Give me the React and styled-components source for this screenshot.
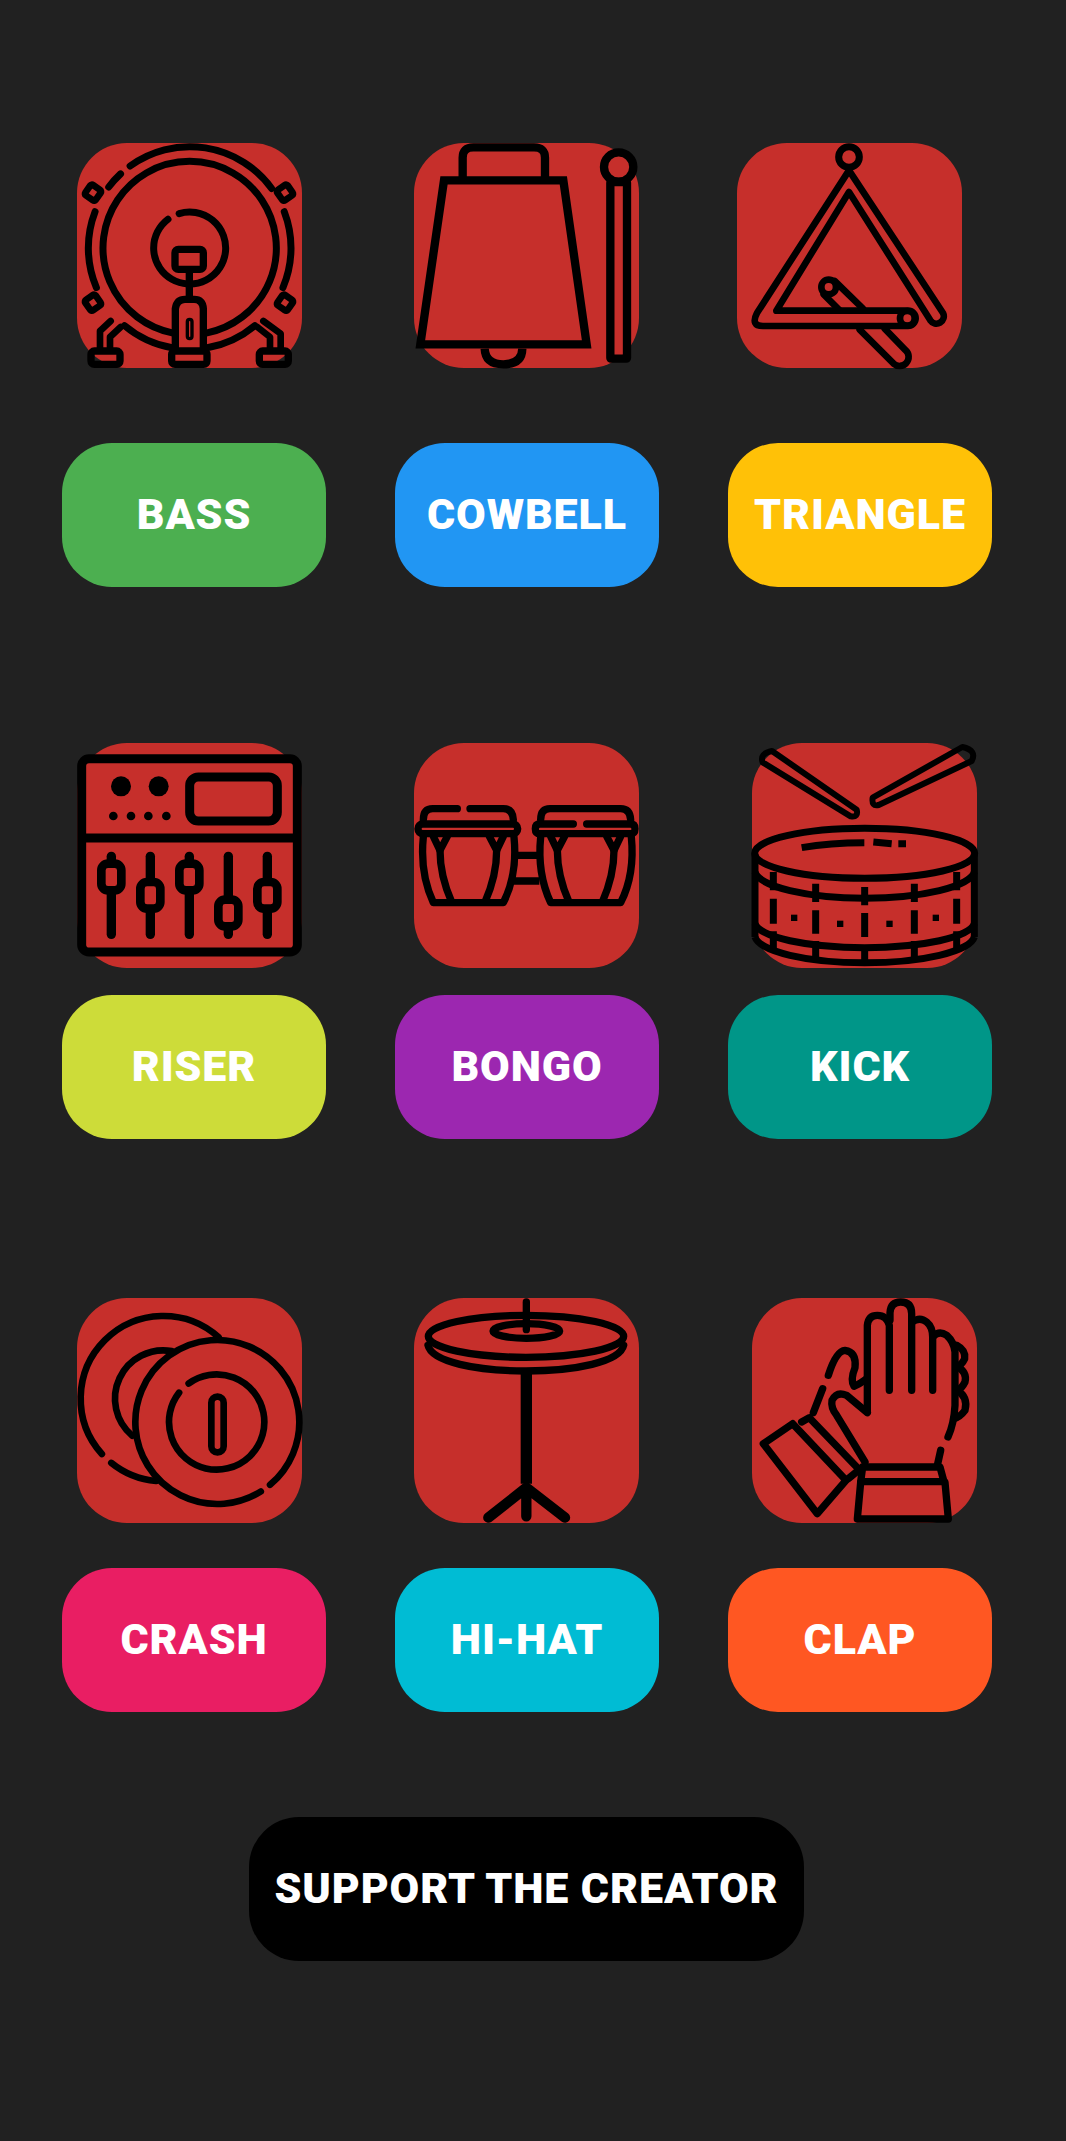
import React from 'react';
import styled, { createGlobalStyle } from 'styled-components';

const ink = '#000';
const tileRed = '#c62f2b';

// icon strokes are written in the 3x units of a 675 box, arcs by clock angle
const arc = (cx, cy, r, from, to) => {
    const rad = (deg) => (deg * Math.PI) / 180;
    const x0 = cx + r * Math.sin(rad(from));
    const y0 = cy - r * Math.cos(rad(from));
    const x1 = cx + r * Math.sin(rad(to));
    const y1 = cy - r * Math.cos(rad(to));
    const large = to - from > 180 ? 1 : 0;
    return `M${x0},${y0} A${r},${r} 0 ${large} 1 ${x1},${y1}`;
};

const Icon = ({ left, top, children }) => (
    <IconSvg viewBox={`${left} ${top} 675 675`} fill='none' stroke={ink} strokeLinecap='round' strokeLinejoin='round'>
        {children}
    </IconSvg>
);

const BassIcon = () => (
    <Icon left={81} top={68}>
        <g strokeWidth='21'>
            <path d={arc(419, 383, 304, -36, 54)} />
            <path d={arc(419, 383, 304, -53, -43)} />
            <path d={arc(419, 383, 304, 69, 113)} />
            <path d={arc(419, 383, 304, -113, -69)} />
            <path d={arc(419, 383, 304, 140, 170)} />
            <path d={arc(419, 383, 304, -170, -140)} />
            <path d={arc(419, 383, 260, -169, 169)} />
            <path d={arc(419, 383, 108, -17, 323)} />
        </g>
        <g strokeWidth='20'>
            <rect x='110' y='198' width='38' height='38' rx='6' transform='rotate(35 129 217)' fill={tileRed} />
            <rect x='686' y='198' width='38' height='38' rx='6' transform='rotate(-35 705 217)' fill={tileRed} />
            <rect x='110' y='528' width='38' height='38' rx='6' transform='rotate(-35 129 547)' fill={tileRed} />
            <rect x='686' y='528' width='38' height='38' rx='6' transform='rotate(35 705 547)' fill={tileRed} />
            <path d='M182,602 L150,632 V688 M212,620 L180,650 V688' />
            <path d='M640,602 L692,640 V688 M622,620 L660,650 V688' />
        </g>
        <g strokeWidth='22'>
            <rect x='375' y='387' width='85' height='60' rx='10' fill={tileRed} />
            <path d='M418,455 V535' />
            <path d='M376,690 V565 Q380,537 405,537 H432 Q458,537 460,565 V690' fill={tileRed} />
            <rect x='365' y='692' width='106' height='40' rx='10' fill={tileRed} />
            <rect x='123' y='692' width='87' height='40' rx='10' />
            <rect x='628' y='692' width='87' height='40' rx='10' />
        </g>
        <rect x='412' y='597' width='14' height='58' rx='7' strokeWidth='10' />
    </Icon>
);

const CowbellIcon = () => (
    <Icon left={72} top={68}>
        <g strokeWidth='25' strokeLinejoin='miter' strokeLinecap='butt'>
            <path d='M218,175 V112 Q218,81 250,81 H432 Q465,81 465,112 V175' />
            <path d='M162,180 H520 L590,672 H91 Z' />
            <path d='M284,685 Q286,732 340,732 Q396,732 397,685' />
        </g>
        <circle cx='686' cy='140' r='44' strokeWidth='25' />
        <rect x='661' y='185' width='50' height='530' rx='2' strokeWidth='25' />
    </Icon>
);

const TriangleIcon = () => (
    <Icon left={52} top={68}>
        <circle cx='388' cy='110' r='31' strokeWidth='21' />
        <g strokeWidth='20'>
            <path d='M345,482 L430,565 M495,625 L558,690 A24,24 0 0 1 522,730 L420,628 M360,570 L312,522' />
            <circle cx='327' cy='500' r='22' />
            <path d='M388,150 L112,578 Q92,617 130,617 H565 A23,23 0 0 0 565,571 H170 L388,215 L632,600 A22,22 0 0 0 670,578 Z' />
            <circle cx='563' cy='594' r='22' />
        </g>
    </Icon>
);

const FADERS = [
    { x: 184, y: 440 },
    { x: 301, y: 495 },
    { x: 418, y: 440 },
    { x: 535, y: 548 },
    { x: 652, y: 495 },
];

const RiserIcon = () => (
    <Icon left={81} top={38}>
        <rect x='95' y='85' width='647' height='580' rx='22' strokeWidth='27' />
        <path d='M95,323 H742' strokeWidth='27' strokeLinecap='butt' />
        <rect x='419' y='140' width='263' height='132' rx='26' strokeWidth='27' />
        <g fill={ink} stroke='none'>
            <circle cx='213' cy='168' r='30' />
            <circle cx='326' cy='168' r='30' />
            <circle cx='190' cy='257' r='13' />
            <circle cx='243' cy='257' r='13' />
            <circle cx='295' cy='257' r='13' />
            <circle cx='349' cy='257' r='13' />
        </g>
        {FADERS.map(({ x, y }) => (
            <g key={x}>
                <path d={`M${x},378 V612`} strokeWidth='28' />
                <rect x={x - 30} y={y - 40} width='60' height='80' rx='20' fill={tileRed} strokeWidth='26' />
            </g>
        ))}
    </Icon>
);

const BongoBody = () => (
    <>
        <path d='M100,320 C92,400 108,470 130,517 H340 C364,470 380,400 372,320' />
        <path d='M150,360 C150,420 165,470 185,515 M320,360 C320,420 305,470 285,515' />
        <path d='M130,318 L150,360 L172,318 M298,318 L320,360 L340,318' />
    </>
);

const BongoIcon = () => (
    <Icon left={72} top={38}>
        <g strokeWidth='22'>
            <path d='M100,268 Q100,235 128,235 H202 M240,235 H340 Q368,235 370,268' />
            <rect x='84' y='281' width='299' height='29' rx='14' fill={tileRed} />
            <BongoBody />
            <path d='M375,375 H448 M372,452 H448' strokeLinecap='butt' />
            <g transform='translate(352 0)'>
                <path d='M100,268 Q100,235 128,235 H340 Q368,235 370,268' />
                <path d='M198,281 H98 Q84,281 84,295 Q84,310 98,310 H369 Q383,310 383,295 Q383,281 369,281 H238' />
                <BongoBody />
            </g>
        </g>
    </Icon>
);

const LUGS = [
    { x: 130, top: [425, 480], mid: [505, 580], low: [603, 660] },
    { x: 257, top: [460, 515], mid: [540, 610], low: [632, 685] },
    { x: 404, top: [470, 525], mid: [548, 620], low: [645, 700] },
    { x: 553, top: [460, 515], mid: [540, 610], low: [632, 685] },
    { x: 680, top: [425, 480], mid: [505, 580], low: [603, 660] },
];

const SnareIcon = () => (
    <Icon left={66} top={38}>
        <g strokeWidth='18'>
            <path d='M126,62 L380,238 Q386,262 362,258 L98,96 Q88,70 126,62 Z' />
            <path d='M697,50 L428,202 Q424,230 446,224 L725,92 Q742,60 697,50 Z' />
        </g>
        <g strokeWidth='21' strokeLinecap='butt'>
            <ellipse cx='404' cy='369' rx='330' ry='75' />
            <path d='M75,370 V620 M733,370 V620' />
            <path d='M75,425 A330,85 0 0 0 733,425' />
            <path d='M75,580 A330,78 0 0 0 733,580' />
            <path d='M75,620 A330,84 0 0 0 733,620' />
            <path d='M215,352 Q300,337 403,337 M430,335 L485,340 M505,340 H528' />
            {LUGS.map(({ x, top, mid, low }) => (
                <path key={x} d={`M${x},${top[0]} V${top[1]} M${x},${mid[0]} V${mid[1]} M${x},${low[0]} V${low[1]}`} />
            ))}
        </g>
        <g fill={ink} stroke='none'>
            <rect x='183' y='553' width='19' height='19' />
            <rect x='321' y='571' width='19' height='19' />
            <rect x='469' y='571' width='19' height='19' />
            <rect x='608' y='553' width='19' height='19' />
        </g>
    </Icon>
);

const CrashIcon = () => (
    <Icon left={81} top={53}>
        <g strokeWidth='20'>
            <path d={arc(340, 355, 248, 228, 402)} />
            <path d={arc(340, 355, 248, 185, 219)} />
            <path d={arc(340, 355, 145, 220, 370)} />
            <path d={arc(502, 425, 246, 148, 500)} />
            <path d={arc(500, 425, 143, -36, 308)} />
            <rect x='484' y='349' width='37' height='167' rx='18' />
        </g>
    </Icon>
);

const HiHatIcon = () => (
    <Icon left={72} top={53}>
        <g strokeWidth='22'>
            <ellipse cx='408' cy='168' rx='293' ry='63' />
            <path d='M114,195 C125,245 260,272 408,272 C556,272 690,245 701,195' />
            <ellipse cx='409' cy='152' rx='100' ry='22' />
            <path d='M409,65 V148' />
        </g>
        <path d='M409,280 V610' strokeWidth='34' strokeLinecap='butt' />
        <path d='M409,622 L295,712 M409,622 L525,712 M409,622 V708' strokeWidth='31' />
    </Icon>
);

const ClapIcon = () => (
    <Icon left={66} top={53}>
        <g strokeWidth='22'>
            <path d='M412,395 V135 Q415,105 442,105 Q470,105 478,135 V330' />
            <path d='M480,120 V97 Q482,65 512,65 Q545,65 545,100 V330' />
            <path d='M546,125 Q570,108 590,125 Q608,140 608,170 V330' />
            <path d='M610,168 Q628,150 650,165 Q672,185 675,215 V375 Q672,430 654,470' />
            <path d='M680,195 Q708,210 704,235 Q695,255 680,258 Q712,275 705,305 Q695,325 682,330 Q715,350 705,390 Q690,410 672,415' />
            <path d='M632,510 L622,555' />
            <path d='M412,397 L350,345 Q320,332 306,360 Q302,382 320,405 L405,545' />
            <path d='M295,285 Q318,212 345,210 Q380,215 375,262 Q360,300 372,318 Q388,312 410,295' />
            <path d='M278,325 L250,397' />
            <path d='M100,490 L188,430 L348,600 L262,700 Z' />
            <path d='M215,425 L238,412 L388,568 L355,595' />
            <path d='M398,560 H630 L642,604 H392 L398,560' />
            <path d='M392,606 L382,716 H655 L645,606' />
        </g>
    </Icon>
);

const SECTIONS = [
    {
        top: 0,
        gap: 75,
        pads: [
            { Drawing: BassIcon, left: 77, label: 'BASS', color: '#4caf50' },
            { Drawing: CowbellIcon, left: 112, label: 'COWBELL', color: '#2196f3' },
            { Drawing: TriangleIcon, left: 98, label: 'TRIANGLE', color: '#ffc107' },
        ],
    },
    {
        top: 156,
        gap: 27,
        pads: [
            { Drawing: RiserIcon, left: 77, label: 'RISER', color: '#cddc39' },
            { Drawing: BongoIcon, left: 112, label: 'BONGO', color: '#9c27b0' },
            { Drawing: SnareIcon, left: 113, label: 'KICK', color: '#009688' },
        ],
    },
    {
        top: 159,
        gap: 45,
        pads: [
            { Drawing: CrashIcon, left: 77, label: 'CRASH', color: '#e91e63' },
            { Drawing: HiHatIcon, left: 112, label: 'HI-HAT', color: '#00bcd4' },
            { Drawing: ClapIcon, left: 113, label: 'CLAP', color: '#ff5722' },
        ],
    },
];

export default function App() {
    return (
        <Page>
            <GlobalStyle />
            {SECTIONS.map(({ top, gap, pads }) => (
                <Section key={pads[0].label} $top={top}>
                    <TileRow>
                        {pads.map(({ Drawing, left, label }) => (
                            <Tile key={label} $left={left}>
                                <Drawing />
                            </Tile>
                        ))}
                    </TileRow>
                    <ButtonRow $gap={gap}>
                        {pads.map(({ label, color }) => (
                            <PadButton key={label} $color={color}>
                                {label}
                            </PadButton>
                        ))}
                    </ButtonRow>
                </Section>
            ))}
            <Footer>
                <SupportButton>SUPPORT THE CREATOR</SupportButton>
            </Footer>
        </Page>
    );
}

const GlobalStyle = createGlobalStyle`
    body {
        margin: 0;
        background: #212121;
    }
`;

const Page = styled.main`
    min-height: 2141px;
    box-sizing: border-box;
    padding-top: 143px;
    background: #212121;
    overflow: hidden;
`;

const Section = styled.section`
    margin-top: ${(props) => props.$top}px;
`;

const TileRow = styled.div`
    display: flex;
`;

const Tile = styled.div`
    flex: none;
    width: 225px;
    height: 225px;
    margin-left: ${(props) => props.$left}px;
    border-radius: 50px;
    background: ${tileRed};
`;

const IconSvg = styled.svg`
    display: block;
    width: 225px;
    height: 225px;
    overflow: visible;
`;

const ButtonRow = styled.div`
    display: flex;
    gap: 69px;
    margin-top: ${(props) => props.$gap}px;
    padding-left: 62px;
`;

const PadButton = styled.button`
    flex: none;
    width: 264px;
    height: 144px;
    padding: 0 0 3px;
    border: 0;
    border-radius: 50px;
    background: ${(props) => props.$color};
    color: #fff;
    font-family: 'Roboto', 'Liberation Sans', sans-serif;
    font-size: 43px;
    font-weight: 900;
    letter-spacing: 0.9px;
`;

const Footer = styled.div`
    display: flex;
    justify-content: center;
    width: 929px;
    margin-top: 105px;
    padding-left: 62px;
`;

const SupportButton = styled(PadButton)`
    width: 555px;
    background: #000;
`;
